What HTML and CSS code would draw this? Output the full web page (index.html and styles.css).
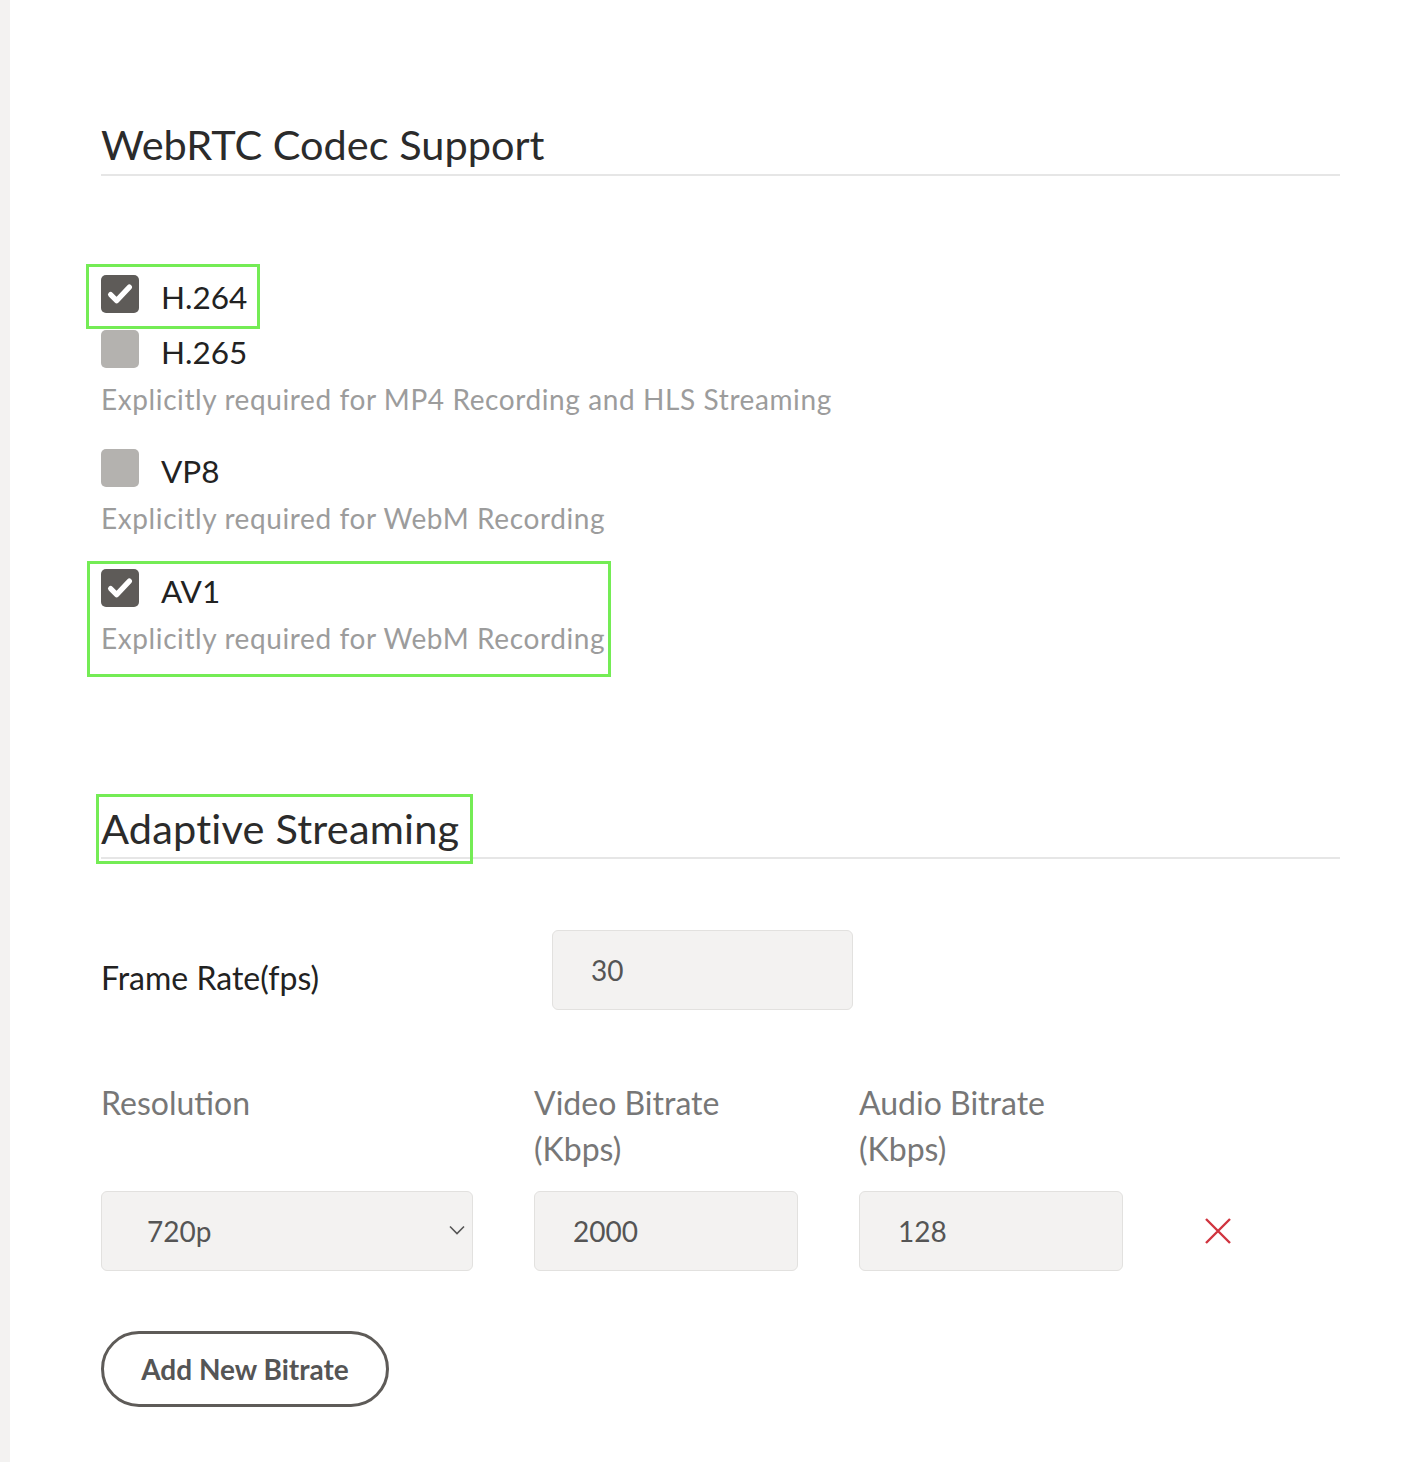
FILE: index.html
```html
<!DOCTYPE html>
<html>
<head>
    <title>Stream Settings</title>
    <link rel="stylesheet" href="styles.css">
</head>
<body>
    <div class="page">
        <div class="content">
            <h2 class="section-title">WebRTC Codec Support</h2>

            <div class="codecs">
                <div class="codec marked">
                    <label class="check-row">
                        <span class="box checked">
                            <svg viewBox="0 0 24 24" width="30" height="30"><path d="M4.5 12.5l4.8 4.8L19.5 6.5" fill="none" stroke="#fff" stroke-width="4.2" stroke-linecap="round" stroke-linejoin="round"/></svg>
                        </span>
                        <span class="codec-name">H.264</span>
                    </label>
                </div>

                <div class="codec">
                    <label class="check-row">
                        <span class="box"></span>
                        <span class="codec-name">H.265</span>
                    </label>
                    <p class="hint">Explicitly required for MP4 Recording and HLS Streaming</p>
                </div>

                <div class="codec">
                    <label class="check-row">
                        <span class="box"></span>
                        <span class="codec-name">VP8</span>
                    </label>
                    <p class="hint">Explicitly required for WebM Recording</p>
                </div>

                <div class="codec marked wide">
                    <label class="check-row">
                        <span class="box checked">
                            <svg viewBox="0 0 24 24" width="30" height="30"><path d="M4.5 12.5l4.8 4.8L19.5 6.5" fill="none" stroke="#fff" stroke-width="4.2" stroke-linecap="round" stroke-linejoin="round"/></svg>
                        </span>
                        <span class="codec-name">AV1</span>
                    </label>
                    <p class="hint">Explicitly required for WebM Recording</p>
                </div>
            </div>

            <h2 class="section-title second"><span class="marked-title">Adaptive Streaming</span></h2>

            <div class="frame-row">
                <label class="field-label dark">Frame Rate(fps)</label>
                <input class="field fps" type="text" value="30">
            </div>

            <div class="bitrate-grid">
                <div class="field-label">Resolution</div>
                <div class="field-label">Video Bitrate<br>(Kbps)</div>
                <div class="field-label">Audio Bitrate<br>(Kbps)</div>
                <div></div>

                <div class="select-wrap">
                    <div class="field select">720p</div>
                    <svg class="chevron" viewBox="0 0 16 10" width="16" height="10"><path d="M1 1.5l7 7 7-7" fill="none" stroke="#555" stroke-width="1.6"/></svg>
                </div>
                <input class="field" type="text" value="2000">
                <input class="field" type="text" value="128">
                <div class="remove">
                    <svg viewBox="0 0 26 26" width="26" height="26"><path d="M1 1L25 25M25 1L1 25" stroke="#d0343f" stroke-width="2.4"/></svg>
                </div>
            </div>

            <button class="add-btn">Add New Bitrate</button>
        </div>
    </div>
</body>
</html>
```

FILE: styles.css
```css
body {
    margin: 0;
    background: #fff;
    font-family: Lato, "Open Sans", sans-serif;
    color: #222;
}

.page {
    border-left: 10px solid #f3f2f1;
    min-height: 1462px;
    box-sizing: border-box;
}

.content {
    width: 1239px;
    padding: 118px 0 40px 91px;
}

.section-title {
    margin: 0;
    font-size: 41.5px;
    font-weight: 400;
    line-height: 52px;
    color: #2b2b2b;
    padding-bottom: 4px;
    border-bottom: 2px solid #e6e6e6;
}

.section-title.second {
    display: flex;
    margin-top: 128px;
    padding-bottom: 3px;
    letter-spacing: 0.2px;
}

.marked-title {
    display: block;
    margin: -5px 0 -7px -2px;
    padding: 5px 11px 7px 2px;
    outline: 3px solid #74ec55;
}

.codecs {
    padding-top: 91px;
}

.codec {
    margin-bottom: 32px;
}

.codec.marked {
    outline: 3px solid #74ec55;
    width: 168px;
    margin-left: -12px;
    padding: 8px 0 13px 12px;
    box-sizing: border-box;
    margin-bottom: 4px;
}

.codec.marked.wide {
    width: 518px;
    margin-left: -11px;
    padding: 5px 0 18px 11px;
    margin-top: -4px;
    margin-bottom: 0;
}

.check-row {
    display: flex;
    align-items: center;
    gap: 22px;
    height: 38px;
}

.box {
    width: 38px;
    height: 38px;
    border-radius: 5px;
    background: #b4b2af;
    display: flex;
    align-items: center;
    justify-content: center;
    flex-shrink: 0;
}

.box.checked {
    background: #5e5b58;
}

.codec-name {
    font-size: 31.5px;
    color: #222;
    padding-top: 5px;
}

.hint {
    margin: 13px 0 0;
    font-size: 28px;
    line-height: 36px;
    color: #9c9c9c;
    letter-spacing: 0.6px;
}

.frame-row {
    display: flex;
    align-items: center;
    margin-top: 71px;
}

.frame-row .field-label {
    width: 451px;
    padding-top: 15px;
}

.field-label {
    font-size: 32px;
    line-height: 46px;
    color: #777;
}

.field-label.dark {
    color: #222;
}

.field {
    box-sizing: border-box;
    height: 80px;
    background: #f3f2f1;
    border: 1.5px solid #e2e1df;
    border-radius: 6px;
    font-family: Lato, "Open Sans", sans-serif;
    font-size: 28px;
    color: #555;
    padding: 0 0 0 38px;
    outline: none;
    width: 100%;
}

.field.fps {
    width: 301px;
}

.bitrate-grid {
    display: grid;
    grid-template-columns: 372px 264px 264px 60px;
    column-gap: 61px;
    row-gap: 19px;
    margin-top: 70px;
}

.select-wrap {
    position: relative;
}

.field.select {
    display: flex;
    align-items: center;
    padding-left: 45px;
}

.chevron {
    position: absolute;
    right: 8px;
    top: 34px;
}

.remove {
    display: flex;
    align-items: center;
    padding-left: 21px;
}

.add-btn {
    margin-top: 60px;
    width: 288px;
    height: 76px;
    background: #fff;
    border: 3.5px solid #5e5b58;
    border-radius: 40px;
    font-family: Lato, "Open Sans", sans-serif;
    font-weight: 700;
    font-size: 28px;
    color: #555;
    cursor: pointer;
}
```
